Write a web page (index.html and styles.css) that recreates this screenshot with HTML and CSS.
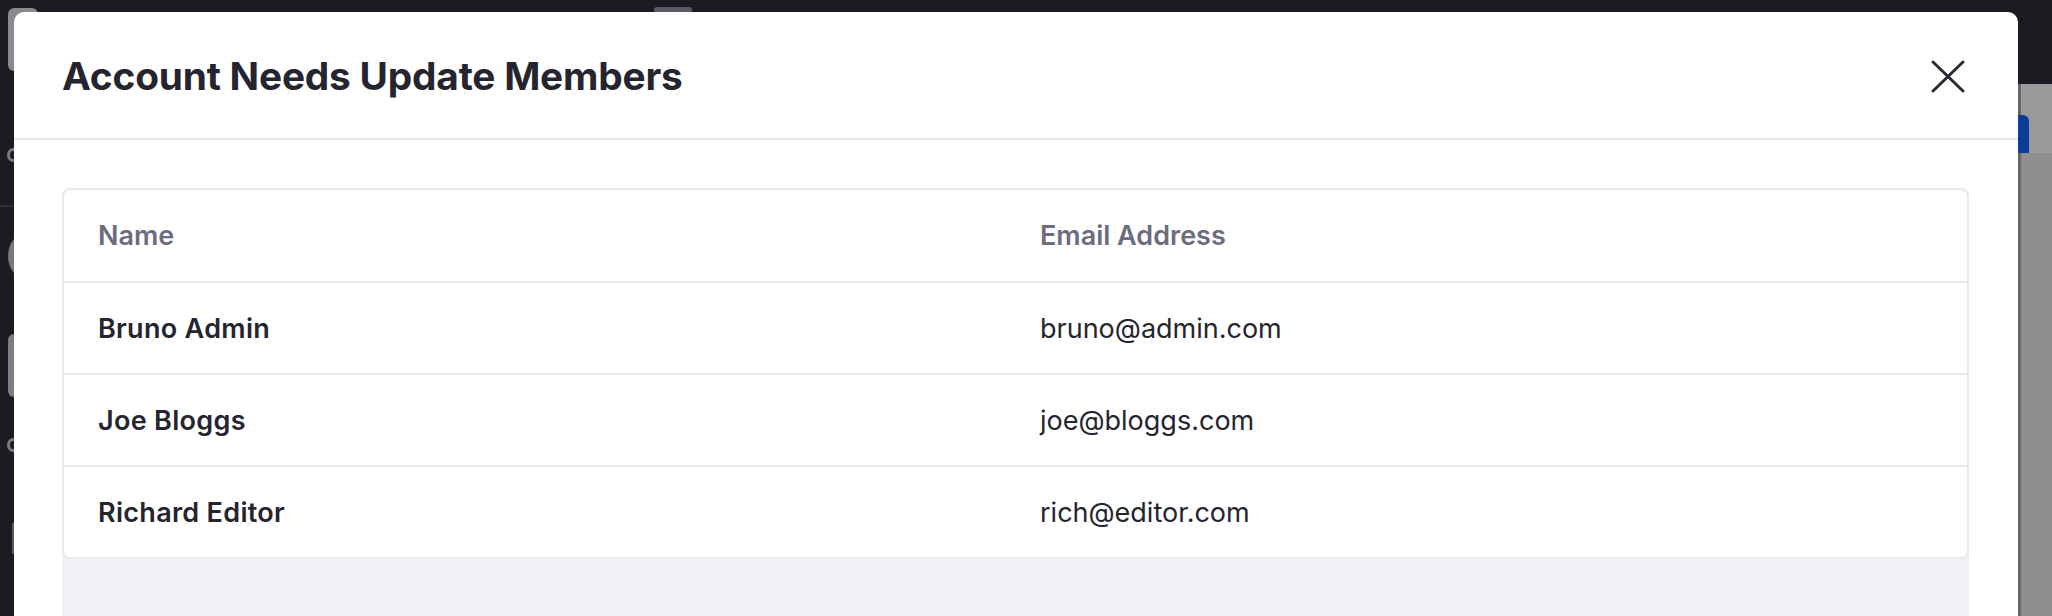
FILE: index.html
```html
<!DOCTYPE html>
<html lang="en">
<head>
<meta charset="utf-8">
<title>Account Needs Update Members</title>
<link rel="stylesheet" href="styles.css">
</head>
<body>
<div class="backdrop">
  <div class="bg-left">
    <span class="bg-tile bg-tile-a"></span>
    <span class="bg-dot bg-dot-a"></span>
    <span class="bg-rule"></span>
    <span class="bg-avatar"></span>
    <span class="bg-band"></span>
    <span class="bg-tile bg-tile-b"></span>
    <span class="bg-dot bg-dot-b"></span>
    <span class="bg-bar"></span>
  </div>
  <span class="bg-top-chip"></span>
  <div class="bg-right">
    <span class="bg-right-top"></span>
    <span class="bg-right-blue"></span>
  </div>
</div>

<div class="modal" role="dialog" aria-labelledby="modal-title">
  <header class="modal-header">
    <h1 class="modal-title" id="modal-title">Account Needs Update Members</h1>
    <button class="close-btn" type="button" aria-label="Close">
      <svg width="34" height="33" viewBox="0 0 34 33" fill="none" stroke="currentColor" stroke-width="3" stroke-linecap="round">
        <path d="M2 2 L32 31"/>
        <path d="M32 2 L2 31"/>
      </svg>
    </button>
  </header>
  <div class="modal-body">
    <div class="table-wrap">
      <div class="table-card">
        <div class="row head">
          <div class="cell">Name</div>
          <div class="cell">Email Address</div>
        </div>
        <div class="row">
          <div class="cell name">Bruno Admin</div>
          <div class="cell">bruno@admin.com</div>
        </div>
        <div class="row">
          <div class="cell name">Joe Bloggs</div>
          <div class="cell">joe@bloggs.com</div>
        </div>
        <div class="row">
          <div class="cell name">Richard Editor</div>
          <div class="cell">rich@editor.com</div>
        </div>
      </div>
      <div class="table-foot"></div>
    </div>
  </div>
</div>
</body>
</html>
```

FILE: styles.css
```css
* { box-sizing: border-box; }

html, body {
  margin: 0;
  padding: 0;
  width: 2052px;
  height: 616px;
  overflow: hidden;
}

body {
  font-family: Inter, "Noto Sans", "Liberation Sans", sans-serif;
  background: #1b1c22;
  position: relative;
  color: #25252f;
}

/* ---------- dimmed app behind the overlay ---------- */
.backdrop {
  position: absolute;
  inset: 0;
  background: #1b1c22;
}

.bg-left {
  position: absolute;
  left: 0;
  top: 0;
  width: 20px;
  height: 616px;
}

.bg-tile {
  position: absolute;
  left: 8px;
  width: 30px;
  background: #8a8a8e;
  border-radius: 6px;
}
.bg-tile-a { top: 8px; height: 63px; }
.bg-tile-b { top: 334px; height: 63px; background: #7d7e83; }

.bg-dot {
  position: absolute;
  left: 7px;
  width: 12px;
  height: 14px;
  border-radius: 50%;
  border: 3px solid #7a7a7e;
}
.bg-dot-a { top: 148px; }
.bg-dot-b { top: 438px; }

.bg-rule {
  position: absolute;
  left: 0;
  top: 205px;
  width: 20px;
  height: 2px;
  background: #2c2d35;
}

.bg-avatar {
  position: absolute;
  left: 8px;
  top: 232px;
  width: 40px;
  height: 48px;
  border-radius: 50%;
  background: #77787c;
}

.bg-band {
  position: absolute;
  left: 0;
  top: 312px;
  width: 20px;
  height: 108px;
  background: #22232b;
  z-index: -1;
}

.bg-bar {
  position: absolute;
  left: 12px;
  top: 523px;
  width: 4px;
  height: 31px;
  background: #5a5b60;
}

.bg-top-chip {
  position: absolute;
  left: 654px;
  top: 7px;
  width: 38px;
  height: 12px;
  border-radius: 3px;
  background: #5b5c63;
}

.bg-right {
  position: absolute;
  left: 2018px;
  top: 84px;
  right: 0;
  bottom: 0;
  background: #8f8f91;
  border-left: 3px solid #67676a;
}

.bg-right-top {
  position: absolute;
  left: 0;
  top: 0;
  right: 0;
  height: 69px;
  background: #9a9a9b;
}

.bg-right-blue {
  position: absolute;
  left: -4px;
  top: 31px;
  width: 12px;
  height: 38px;
  border-radius: 0 6px 0 0;
  background: #0b3d9b;
}

/* ---------- modal ---------- */
.modal {
  position: absolute;
  left: 14px;
  top: 12px;
  width: 2004px;
  height: 640px;
  background: #ffffff;
  border-radius: 10px 10px 0 0;
  display: flex;
  flex-direction: column;
}

.modal-header {
  height: 128px;
  padding: 0 54px 0 48px;
  border-bottom: 2px solid #e7e7ec;
  display: flex;
  align-items: center;
  justify-content: space-between;
}

.modal-title {
  margin: 0;
  font-size: 38.8px;
  font-weight: 700;
  letter-spacing: -0.2px;
  color: #25252f;
  line-height: 1;
  padding-top: 2px;
}

.close-btn {
  border: 0;
  background: none;
  padding: 0;
  margin: 2px -1px 0 0;
  color: #2a2a33;
  display: flex;
  cursor: pointer;
}

.modal-body {
  padding: 48px 49px 0 48px;
  flex: 1;
}

.table-wrap {
  display: flex;
  flex-direction: column;
  height: 100%;
}

.table-card {
  position: relative;
  background: #ffffff;
  border: 2px solid #e8e8ed;
  border-radius: 8px;
}

.row {
  display: grid;
  grid-template-columns: 942px 1fr;
  height: 92px;
  align-items: center;
  border-top: 2px solid #e8e8ed;
}
.row.head {
  border-top: 0;
  height: 91px;
}

.cell {
  padding: 0 34px;
  font-size: 27px;
  font-weight: 400;
  color: #25252f;
}

.row.head .cell {
  font-weight: 600;
  color: #6c6c80;
}

.cell.name {
  font-weight: 600;
  letter-spacing: 0.3px;
}

.table-foot {
  flex: 1;
  background: #f0f1f5;
  margin-top: -10px;
}
```
